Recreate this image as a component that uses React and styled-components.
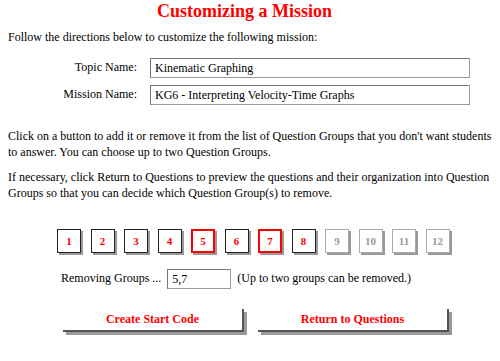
import React from "react";
import styled, { createGlobalStyle } from "styled-components";

const Global = createGlobalStyle`
  html, body { margin: 0; padding: 0; background: #fff; }
  body { font-family: "Liberation Serif", "Times New Roman", Times, serif; color: #000; font-size: 12px; }
`;

const Page = styled.div`
  width: 500px;
  height: 361px;
  overflow: hidden;
  padding: 0 8px;
  box-sizing: border-box;
  font-family: "Liberation Serif", "Times New Roman", Times, serif;
`;

const Title = styled.h1`
  margin: 0;
  padding-right: 11px;
  text-align: center;
  color: #f00;
  font-size: 18px;
  font-weight: bold;
  line-height: 22px;
`;

const Text = styled.p`
  margin: ${(p) => p.$m || "0"};
  font-size: 12px;
  line-height: 16.5px;
`;

const FormGrid = styled.div`
  display: grid;
  grid-template-columns: 129px 320px;
  column-gap: 13px;
  row-gap: 7px;
  align-items: center;
  margin-top: 12px;
`;

const Label = styled.label`
  text-align: right;
  font-size: 12px;
`;

const Field = styled.div`
  box-sizing: border-box;
  height: ${(p) => p.$h || 20}px;
  width: ${(p) => p.$w || 320}px;
  border: 1px solid #777;
  border-right-color: #999;
  border-bottom-color: #999;
  padding: 0 4px;
  font-size: 12px;
  line-height: 18px;
  background: #fff;
`;

const GroupRow = styled.div`
  display: flex;
  gap: 9.5px;
  padding-left: 49px;
  margin-top: 27px;
`;

const GroupButton = styled.div`
  box-sizing: border-box;
  width: 24px;
  height: 24px;
  display: flex;
  align-items: center;
  justify-content: center;
  background: #fff;
  font-size: 11px;
  font-weight: bold;
  color: ${(p) => (p.$disabled ? "#999" : "#f00")};
  border: ${(p) =>
    p.$selected ? "2px solid #f00" : p.$disabled ? "1px solid #aaa" : "1px solid #222"};
  box-shadow: 2px 2px 0 #999;
`;

const RemoveRow = styled.div`
  display: flex;
  align-items: center;
  gap: 6px;
  padding-left: 53px;
  margin-top: 16px;
  font-size: 12px;
`;

const ActionRow = styled.div`
  display: flex;
  padding-left: 55px;
  gap: 14px;
  margin-top: 20px;
`;

const ActionButton = styled.div`
  box-sizing: border-box;
  width: ${(p) => p.$w}px;
  height: 23px;
  display: flex;
  align-items: center;
  justify-content: center;
  background: #fff;
  color: #f00;
  font-weight: bold;
  font-size: 12px;
  border-right: 2px solid #555;
  border-bottom: 2px solid #555;
  box-shadow: 3px 3px 0 #999;
`;

const groups = [1, 2, 3, 4, 5, 6, 7, 8, 9, 10, 11, 12];
const selected = [5, 7];

export default function App() {
  return (
    <Page>
      <Global />
      <Title>Customizing a Mission</Title>
      <Text $m="7px 0 0">Follow the directions below to customize the following mission:</Text>
      <FormGrid>
        <Label>Topic Name:</Label>
        <Field>Kinematic Graphing</Field>
        <Label>Mission Name:</Label>
        <Field>KG6 - Interpreting Velocity-Time Graphs</Field>
      </FormGrid>
      <Text $m="23px 0 0">
        Click on a button to add it or remove it from the list of Question Groups that you don't want students to answer. You can choose up to two Question Groups.
      </Text>
      <Text $m="8px 0 0">
        If necessary, click Return to Questions to preview the questions and their organization into Question Groups so that you can decide which Question Group(s) to remove.
      </Text>
      <GroupRow>
        {groups.map((g) => (
          <GroupButton key={g} $selected={selected.includes(g)} $disabled={g > 8}>
            {g}
          </GroupButton>
        ))}
      </GroupRow>
      <RemoveRow>
        <span>Removing Groups ...</span>
        <Field $w={64}>5,7</Field>
        <span>(Up to two groups can be removed.)</span>
      </RemoveRow>
      <ActionRow>
        <ActionButton $w={181}>Create Start Code</ActionButton>
        <ActionButton $w={191}>Return to Questions</ActionButton>
      </ActionRow>
    </Page>
  );
}
